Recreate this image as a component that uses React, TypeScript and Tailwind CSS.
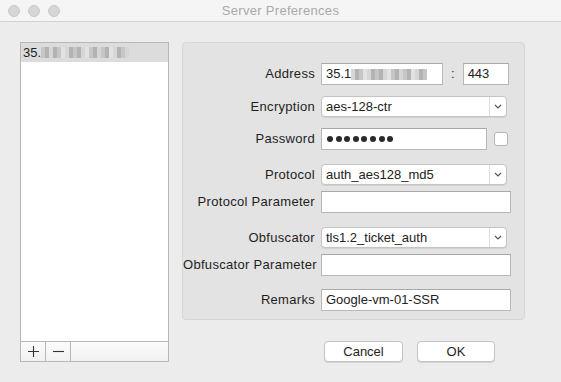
import React from "react";

const font = { fontFamily: '"Liberation Sans", Arial, sans-serif' };

const shades: Record<string, string> = {
  d: "bg-[#b3b3b3]",
  m: "bg-[#c6c6c6]",
  l: "bg-[#d6d6d6]",
  _: "bg-[#e2e2e2]",
};

function Smudge({ blocks }: { blocks: string[] }) {
  // pixelated blur that hides the IP address in the screenshot
  return (
    <span className="inline-flex h-[11px] items-stretch bg-[#e2e2e2]">
      {blocks.map((c, i) => (
        <span key={i} className={`w-[4px] ${shades[c]}`} />
      ))}
    </span>
  );
}

const ipBlocks = ["m", "d", "l", "d", "m", "_", "l", "d", "m", "d", "l", "_", "m", "d", "l", "m", "d", "_", "l", "d", "m", "l"];

function TextField({ w, children }: { w: string; children?: React.ReactNode }) {
  return (
    <div
      className={`${w} flex h-[22px] items-center overflow-hidden border border-[#b7b7b7] border-t-[#a9a9a9] bg-white pl-[4px] text-[13px] text-[#222]`}
    >
      {children}
    </div>
  );
}

function Select({ value }: { value: string }) {
  return (
    <div className="flex h-[21px] w-[186px] items-center rounded-[4px] border border-[#c4c4c4] bg-white text-[13px] text-[#222] shadow-[0_1px_0_rgba(0,0,0,0.08)]">
      <span className="flex-1 pl-[4px]">{value}</span>
      <span className="flex h-full w-[17px] items-center justify-center border-l border-[#dcdcdc]">
        <svg width="8" height="5" viewBox="0 0 8 5">
          <path d="M1 1 L4 4 L7 1" fill="none" stroke="#555" strokeWidth="1.2" />
        </svg>
      </span>
    </div>
  );
}

function Row({ label, mt, children }: { label: string; mt: string; children: React.ReactNode }) {
  return (
    <div className={`${mt} flex items-center`}>
      <div className="w-[132px] whitespace-nowrap text-right text-[13px] tracking-[0.3px] text-[#1e1e1e]">{label}</div>
      <div className="ml-[6px] flex items-center">{children}</div>
    </div>
  );
}

export default function App() {
  return (
    <div className="h-[382px] w-[561px] overflow-hidden bg-[#ececec]" style={font}>
      <div className="relative flex h-[22px] items-center justify-center border-b border-[#d2d2d2] bg-[#f5f5f5]">
        <div className="absolute left-[8px] top-[5px] flex gap-[8px]">
          <span className="h-[12px] w-[12px] rounded-full border border-[#c9c9c9] bg-[#d6d6d6]" />
          <span className="h-[12px] w-[12px] rounded-full border border-[#c9c9c9] bg-[#d6d6d6]" />
          <span className="h-[12px] w-[12px] rounded-full border border-[#c9c9c9] bg-[#d6d6d6]" />
        </div>
        <span className="text-[13px] tracking-[0.3px] text-[#a9a9a9]">Server Preferences</span>
      </div>

      <div className="flex pl-[20px] pt-[20px]">
        <div className="flex h-[320px] w-[149px] flex-col border border-[#b8b8b8] bg-white">
          <div className="flex h-[19px] items-center bg-[#dcdcdc] pl-[2px] text-[13px] text-[#1e1e1e]">
            <span>35.</span>
            <Smudge blocks={ipBlocks} />
          </div>
          <div className="flex-1" />
          <div className="flex h-[20px] border-t border-[#b8b8b8] bg-gradient-to-b from-[#fbfbfb] to-[#f1f1f1]">
            <span className="flex w-[25px] items-center justify-center border-r border-[#b8b8b8]">
              <svg width="13" height="13" viewBox="0 0 13 13">
                <path d="M6.5 1 V12 M1 6.5 H12" stroke="#333" strokeWidth="1.1" />
              </svg>
            </span>
            <span className="flex w-[25px] items-center justify-center border-r border-[#b8b8b8]">
              <svg width="13" height="13" viewBox="0 0 13 13">
                <path d="M1 6.5 H12" stroke="#333" strokeWidth="1.1" />
              </svg>
            </span>
            <span className="flex-1" />
          </div>
        </div>

        <div className="ml-[13px] flex flex-col">
          <div className="flex h-[278px] w-[343px] flex-col rounded-[4px] border border-[#d6d6d6] bg-[#e3e3e3] pt-[20px]">
            <Row label="Address" mt="mt-0">
              <TextField w="w-[122px]">
                <span>35.1</span>
                <Smudge blocks={ipBlocks.slice(2, 21)} />
              </TextField>
              <span className="ml-[8px] mr-[8px] text-[13px] text-[#333]">:</span>
              <TextField w="w-[46px]">443</TextField>
            </Row>
            <Row label="Encryption" mt="mt-[11px]">
              <Select value="aes-128-ctr" />
            </Row>
            <Row label="Password" mt="mt-[11px]">
              <TextField w="w-[166px]">
                <span className="flex gap-[2.6px] pl-[1px]">
                  {[0, 1, 2, 3, 4, 5, 6, 7].map((i) => (
                    <span key={i} className="h-[6px] w-[6px] rounded-full bg-[#2a2a2a]" />
                  ))}
                </span>
              </TextField>
              <span className="ml-[7px] h-[14px] w-[14px] rounded-[3px] border border-[#b5b5b5] bg-white" />
            </Row>
            <Row label="Protocol" mt="mt-[14px]">
              <Select value="auth_aes128_md5" />
            </Row>
            <Row label="Protocol Parameter" mt="mt-[6px]">
              <TextField w="w-[190px]" />
            </Row>
            <Row label="Obfuscator" mt="mt-[14px]">
              <Select value="tls1.2_ticket_auth" />
            </Row>
            <Row label="Obfuscator Parameter" mt="mt-[6px]">
              <TextField w="w-[190px]" />
            </Row>
            <Row label="Remarks" mt="mt-[13px]">
              <TextField w="w-[190px]">Google-vm-01-SSR</TextField>
            </Row>
          </div>

          <div className="mt-[21px] flex gap-[14px] pl-[142px]">
            <button className="h-[21px] w-[79px] rounded-[4px] border border-[#c3c3c3] bg-white text-[13px] text-[#1e1e1e] shadow-[0_1px_0_rgba(0,0,0,0.1)]">
              Cancel
            </button>
            <button className="h-[21px] w-[78px] rounded-[4px] border border-[#c3c3c3] bg-white text-[13px] text-[#1e1e1e] shadow-[0_1px_0_rgba(0,0,0,0.1)]">
              OK
            </button>
          </div>
        </div>
      </div>
    </div>
  );
}
